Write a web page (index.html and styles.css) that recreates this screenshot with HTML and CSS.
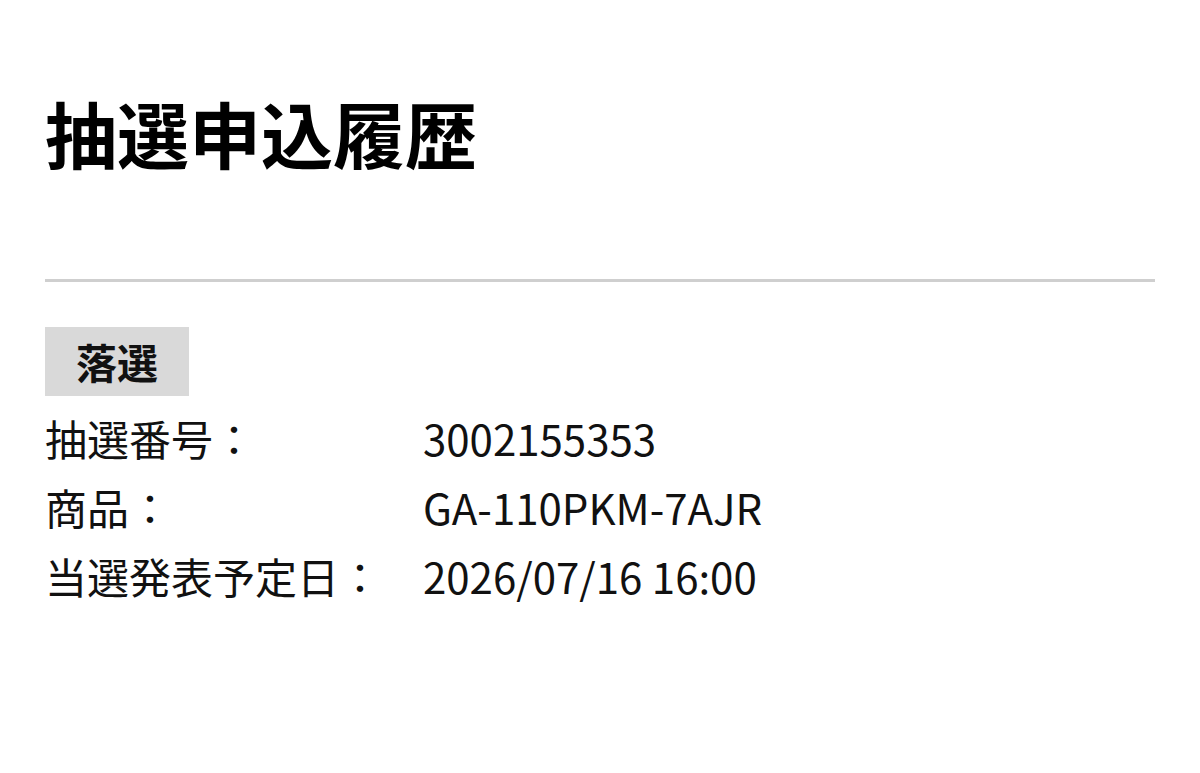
FILE: index.html
```html
<!DOCTYPE html>
<html lang="ja">
<head>
<meta charset="utf-8">
<title>抽選申込履歴</title>
<link rel="stylesheet" href="styles.css">
</head>
<body>
<main class="page">
  <h1 class="page-title">抽選申込履歴</h1>
  <div class="divider"></div>
  <section class="entry">
    <span class="status">落選</span>
    <dl class="details">
      <dt>抽選番号：</dt><dd>3002155353</dd>
      <dt>商品：</dt><dd>GA-110PKM-7AJR</dd>
      <dt>当選発表予定日：</dt><dd>2026/07/16 16:00</dd>
    </dl>
  </section>
</main>
</body>
</html>
```
FILE: styles.css
```css
html, body {
  margin: 0;
  background: #ffffff;
}

body {
  font-family: "Noto Sans CJK JP", "Noto Sans", sans-serif;
  color: #111111;
}

.page {
  padding: 89px 45px 0;
}

.page-title {
  margin: 0;
  font-size: 72px;
  line-height: 86px;
  font-weight: 700;
  color: #000000;
}

.divider {
  margin-top: 104px;
  height: 3px;
  background: #cfcfcf;
}

.entry {
  margin-top: 45px;
}

.status {
  display: inline-block;
  padding: 0 31px;
  background: #d9d9d9;
  font-size: 41px;
  line-height: 69px;
  font-weight: 700;
  color: #111111;
}

.details {
  margin: 7px 0 0;
  display: grid;
  grid-template-columns: 378px 1fr;
  font-size: 42px;
  line-height: 69px;
}

.details dt,
.details dd {
  margin: 0;
}
```
